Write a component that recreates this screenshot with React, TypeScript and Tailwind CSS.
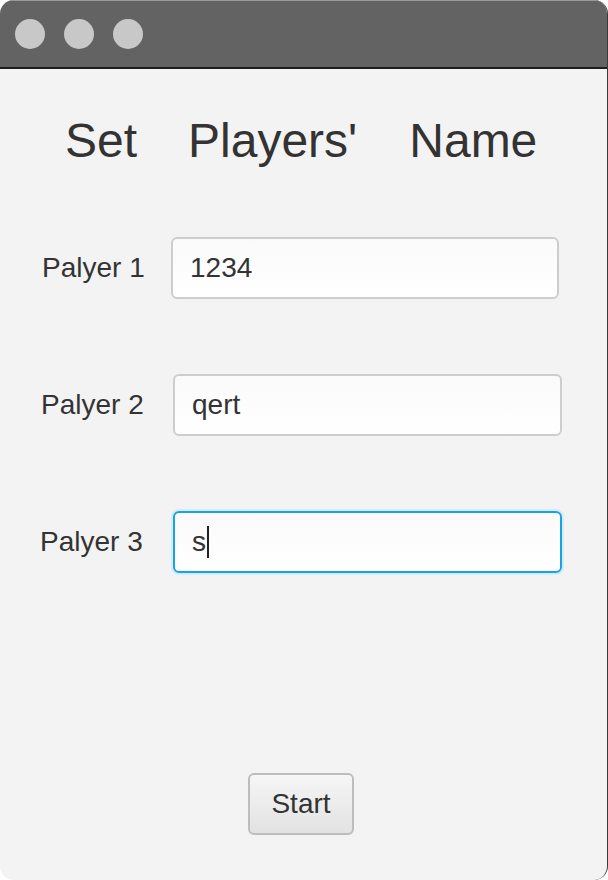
const FONT = { fontFamily: '"Liberation Sans", Arial, sans-serif' }

function Dot() {
  return <div className="h-[30px] w-[30px] rounded-full bg-[#c8c8c8]" />
}

interface RowProps {
  label: string
  value: string
  focused?: boolean
  padLeft: string
  labelWidth: string
  inputWidth: string
}

function PlayerRow({ label, value, focused, padLeft, labelWidth, inputWidth }: RowProps) {
  return (
    <div className={`flex h-[62px] items-center ${padLeft}`}>
      <span className={`shrink-0 text-[28px] leading-none text-[#333333] ${labelWidth}`}>{label}</span>
      <div
        className={`flex h-[62px] items-center rounded-[6px] border-2 bg-gradient-to-b from-[#fafafa] to-white pl-[17px] ${inputWidth} ${
          focused ? 'border-[#1aa3e0] shadow-[0_0_0_2px_#d2ecf8]' : 'border-[#cdcdcd]'
        }`}
      >
        <span className="text-[28px] leading-none text-[#333333]">{value}</span>
        {focused && <span className="ml-[1px] h-[32px] w-[2px] bg-[#222]" />}
      </div>
    </div>
  )
}

export default function App() {
  return (
    <div className="h-[880px] w-[608px] overflow-hidden bg-white" style={FONT}>
      <div className="flex h-[880px] w-[608px] flex-col overflow-hidden rounded-[14px] border-r border-[#3a3a3a] bg-[#f3f3f3]">
        {/* Title bar */}
        <div className="flex h-[69px] shrink-0 items-center gap-[19px] border-t border-[#9a9a9a] border-b-2 border-b-[#1e1e1e] bg-[#636363] pl-[15px]">
          <Dot />
          <Dot />
          <Dot />
        </div>

        {/* Heading */}
        <div className="mt-[48px] flex h-[48px] items-center text-[48px] leading-none text-[#333333]">
          <span className="ml-[65px]">Set</span>
          <span className="ml-[51px]">Players'</span>
          <span className="ml-[52px]">Name</span>
        </div>

        {/* Player rows */}
        <div className="mt-[72px] flex flex-col gap-[75px]">
          <PlayerRow label="Palyer 1" value="1234" padLeft="pl-[42px]" labelWidth="w-[129px]" inputWidth="w-[388px]" />
          <PlayerRow label="Palyer 2" value="qert" padLeft="pl-[41px]" labelWidth="w-[132px]" inputWidth="w-[389px]" />
          <PlayerRow label="Palyer 3" value="s" focused padLeft="pl-[40px]" labelWidth="w-[133px]" inputWidth="w-[389px]" />
        </div>

        {/* Start */}
        <div className="mt-[200px] pl-[248px]">
          <button className="h-[62px] w-[106px] rounded-[6px] border-2 border-[#bdbdbd] bg-gradient-to-b from-[#f6f6f6] to-[#e2e2e2] text-[28px] leading-none text-[#333333]">
            Start
          </button>
        </div>
      </div>
    </div>
  )
}
